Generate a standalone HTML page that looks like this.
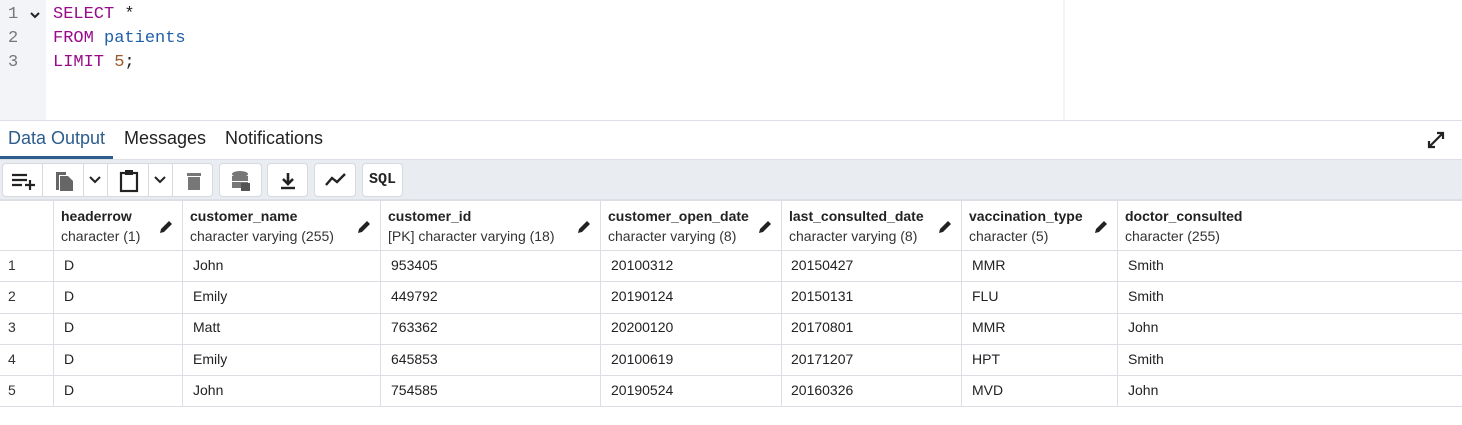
<!DOCTYPE html>
<html><head><meta charset="utf-8"><style>
*{margin:0;padding:0;box-sizing:border-box}
body{width:1462px;height:425px;overflow:hidden;background:#fff;font-family:"Liberation Sans",sans-serif;color:#222;position:relative}
.a{position:absolute}
.code{font-family:"Liberation Mono",monospace;font-size:17px;line-height:24px}
.kw{color:#990a8a}.id{color:#1f5fa8}.num{color:#9a5a2a}
.btn{position:absolute;top:163px;height:34px;background:#fff;border:1px solid #d6d9de;border-radius:4px}
.sep{position:absolute;top:0;bottom:0;width:1px;background:#d6d9de}
.col{position:absolute;top:200px;height:206px;border-right:1px solid #dcdee4}
.hn{font-size:14px;font-weight:bold;color:#222;position:absolute;top:8px;left:8px;white-space:nowrap}
.ht{font-size:14px;color:#333;position:absolute;top:28px;left:8px;white-space:nowrap}
.hl{position:absolute;left:0;width:1462px;height:1px;background:#dcdee4}
</style></head><body>
<div class="a" style="left:0;top:0;width:46px;height:120px;background:#f3f4f8"></div>
<div class="a" style="left:1063px;top:0;width:2px;height:120px;background:#f3f4f6"></div>
<div class="a code" style="left:8px;top:3px;color:#777">1<br>2<br>3</div>
<div class="a" style="left:29px;top:9px;font-size:12px;color:#222"><svg width="12" height="12" viewBox="0 0 12 12"><path d="M2 4l4 4 4-4" stroke="#222" stroke-width="2" fill="none"/></svg></div>
<div class="a code" style="left:53px;top:3px"><span class="kw">SELECT</span> *<br><span class="kw">FROM</span> <span class="id">patients</span><br><span class="kw">LIMIT</span> <span class="num">5</span>;</div>
<div class="a" style="left:0;top:120px;width:1462px;height:1px;background:#dde0e6"></div>
<div class="a" style="left:8px;top:128px;font-size:18px;color:#2c5d8c">Data Output</div>
<div class="a" style="left:124px;top:128px;font-size:18px;color:#222">Messages</div>
<div class="a" style="left:225px;top:128px;font-size:18px;color:#222">Notifications</div>
<div class="a" style="left:0;top:156px;width:113px;height:3px;background:#2c5d8c"></div>
<svg class="a" style="left:1426px;top:130px" width="20" height="20" viewBox="0 0 20 20"><path d="M3 17L17 3M11 3h6v6M3 11v6h6" stroke="#222" stroke-width="2.2" fill="none"/></svg>
<div class="a" style="left:0;top:159px;width:1462px;height:41px;background:#e9ecf1;border-top:1px solid #dde0e6;border-bottom:1px solid #dde0e6"></div>
<div class="btn" style="left:2px;width:211px">
<div class="sep" style="left:39px"></div><div class="sep" style="left:80px"></div><div class="sep" style="left:104px"></div><div class="sep" style="left:145px"></div><div class="sep" style="left:169px"></div>
<svg class="a" style="left:8px;top:7px" width="26" height="20" viewBox="0 0 26 20"><path d="M1 4h15M1 9h15M1 14h10M14 14h10M19 9v10" stroke="#222" stroke-width="2.2"/></svg>
<svg class="a" style="left:50px;top:6px" width="22" height="22" viewBox="0 0 22 22"><path d="M3 2h10v3H6v15H3z" fill="#666"/><path d="M7 6h8l5 5v10H7z" fill="#666"/></svg>
<svg class="a" style="left:85px;top:11px" width="14" height="10" viewBox="0 0 14 10"><path d="M2 2l5 5 5-5" stroke="#222" stroke-width="2" fill="none"/></svg>
<svg class="a" style="left:115px;top:5px" width="22" height="24" viewBox="0 0 22 24"><rect x="3" y="4" width="16" height="18" stroke="#222" stroke-width="2.2" fill="none"/><rect x="7" y="1" width="8" height="5" fill="#222"/></svg>
<svg class="a" style="left:150px;top:11px" width="14" height="10" viewBox="0 0 14 10"><path d="M2 2l5 5 5-5" stroke="#222" stroke-width="2" fill="none"/></svg>
<svg class="a" style="left:182px;top:7px" width="18" height="20" viewBox="0 0 18 20"><rect x="2" y="2" width="14" height="3" fill="#777"/><rect x="3" y="6" width="12" height="13" fill="#777"/></svg>
</div>
<div class="btn" style="left:219px;width:43px"><svg class="a" style="left:11px;top:6px" width="20" height="22" viewBox="0 0 20 22"><ellipse cx="9" cy="4" rx="8" ry="3" fill="#777"/><rect x="1" y="6" width="16" height="5" fill="#777"/><rect x="1" y="12" width="16" height="6" fill="#777"/><rect x="10" y="13" width="9" height="8" fill="#555"/></svg></div>
<div class="btn" style="left:267px;width:41px"><svg class="a" style="left:10px;top:7px" width="20" height="20" viewBox="0 0 20 20"><path d="M10 2v10M5 8l5 5 5-5" stroke="#222" stroke-width="2.6" fill="none"/><path d="M3 17h14" stroke="#222" stroke-width="2.4"/></svg></div>
<div class="btn" style="left:314px;width:42px"><svg class="a" style="left:9px;top:8px" width="24" height="16" viewBox="0 0 24 16"><path d="M2 13l6-7 5 4 8-8" stroke="#222" stroke-width="2.4" fill="none"/></svg></div>
<div class="btn" style="left:362px;width:41px;font-family:'Liberation Mono',monospace;font-size:15px;font-weight:bold;text-align:center;line-height:32px;color:#222">SQL</div>
<div class="hl" style="top:200px"></div>
<div class="col" style="left:0;width:54px"></div>
<div class="col" style="left:53px;width:130px"><div class="hn">headerrow</div><div class="ht">character (1)</div></div>
<div class="col" style="left:182px;width:199px"><div class="hn">customer_name</div><div class="ht">character varying (255)</div></div>
<div class="col" style="left:380px;width:221px"><div class="hn">customer_id</div><div class="ht">[PK] character varying (18)</div></div>
<div class="col" style="left:600px;width:182px"><div class="hn">customer_open_date</div><div class="ht">character varying (8)</div></div>
<div class="col" style="left:781px;width:181px"><div class="hn">last_consulted_date</div><div class="ht">character varying (8)</div></div>
<div class="col" style="left:961px;width:157px"><div class="hn">vaccination_type</div><div class="ht">character (5)</div></div>
<div class="col" style="left:1117px;width:345px;border:none"><div class="hn">doctor_consulted</div><div class="ht">character (255)</div></div>
<svg width="0" height="0" style="position:absolute"><defs><symbol id="pen" viewBox="0 0 16 16"><path d="M2 14l1-4 8-8 3 3-8 8z" fill="#222"/></symbol></defs></svg>
<svg class="a" style="left:158px;top:219px" width="16" height="16"><use href="#pen"/></svg>
<svg class="a" style="left:356px;top:219px" width="16" height="16"><use href="#pen"/></svg>
<svg class="a" style="left:576px;top:219px" width="16" height="16"><use href="#pen"/></svg>
<svg class="a" style="left:757px;top:219px" width="16" height="16"><use href="#pen"/></svg>
<svg class="a" style="left:937px;top:219px" width="16" height="16"><use href="#pen"/></svg>
<svg class="a" style="left:1093px;top:219px" width="16" height="16"><use href="#pen"/></svg>
<div class="hl" style="top:250px"></div><div class="hl" style="top:281px"></div><div class="hl" style="top:313px"></div><div class="hl" style="top:344px"></div><div class="hl" style="top:375px"></div><div class="hl" style="top:406px"></div>
<div class="a" style="top:250px;left:0;width:1462px;font-size:14px;line-height:31.2px">
<div class="a" style="left:8px;color:#333">1<br>2<br>3<br>4<br>5</div>
<div class="a" style="left:64px">D<br>D<br>D<br>D<br>D</div>
<div class="a" style="left:193px">John<br>Emily<br>Matt<br>Emily<br>John</div>
<div class="a" style="left:391px">953405<br>449792<br>763362<br>645853<br>754585</div>
<div class="a" style="left:611px">20100312<br>20190124<br>20200120<br>20100619<br>20190524</div>
<div class="a" style="left:791px">20150427<br>20150131<br>20170801<br>20171207<br>20160326</div>
<div class="a" style="left:972px">MMR<br>FLU<br>MMR<br>HPT<br>MVD</div>
<div class="a" style="left:1128px">Smith<br>Smith<br>John<br>Smith<br>John</div>
</div>
</body></html>
